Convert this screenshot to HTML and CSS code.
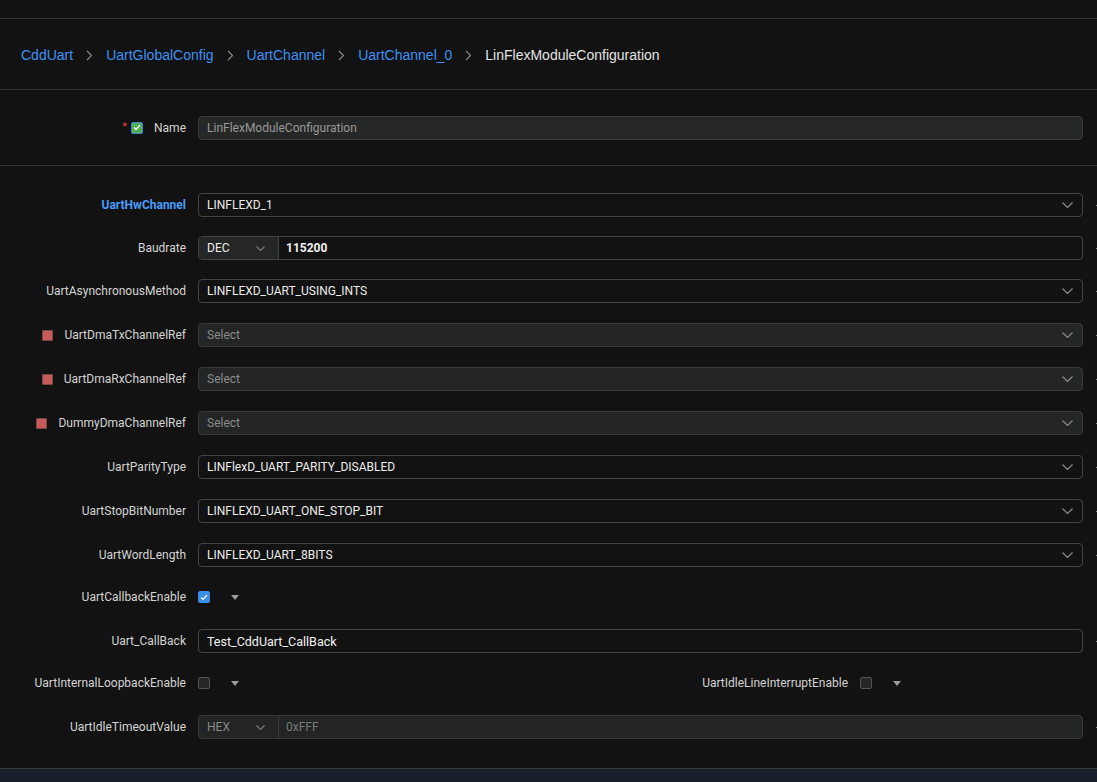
FILE: index.html
```html
<!DOCTYPE html>
<html lang="en">
<head>
  <meta charset="UTF-8">
  <title>LinFlexModuleConfiguration</title>
  <link rel="stylesheet" href="styles.css">
</head>
<body>
  <div class="topbar"></div>

  <nav class="crumbs">
    <a class="crumb">CddUart</a>
    <svg class="sep" width="7" height="11" viewBox="0 0 7 11"><path d="M1 1 L5.5 5.5 L1 10" fill="none" stroke="#8c8c8c" stroke-width="1.1"/></svg>
    <a class="crumb">UartGlobalConfig</a>
    <svg class="sep" width="7" height="11" viewBox="0 0 7 11"><path d="M1 1 L5.5 5.5 L1 10" fill="none" stroke="#8c8c8c" stroke-width="1.1"/></svg>
    <a class="crumb">UartChannel</a>
    <svg class="sep" width="7" height="11" viewBox="0 0 7 11"><path d="M1 1 L5.5 5.5 L1 10" fill="none" stroke="#8c8c8c" stroke-width="1.1"/></svg>
    <a class="crumb">UartChannel_0</a>
    <svg class="sep" width="7" height="11" viewBox="0 0 7 11"><path d="M1 1 L5.5 5.5 L1 10" fill="none" stroke="#8c8c8c" stroke-width="1.1"/></svg>
    <span class="crumb current">LinFlexModuleConfiguration</span>
  </nav>

  <div class="name-row">
    <div class="label">
      <span class="req">*</span>
      <span class="check green"><svg width="8" height="7" viewBox="0 0 8 7"><path d="M1 3.5 L3 5.5 L7 1" fill="none" stroke="#fff" stroke-width="1.3"/></svg></span>
      <span class="name-text">Name</span>
    </div>
    <div class="input disabled">LinFlexModuleConfiguration</div>
  </div>

  <div class="form">
    <div class="row">
      <label class="label key">UartHwChannel</label>
      <div class="select">
        <span>LINFLEXD_1</span>
        <svg class="chev" width="11" height="6" viewBox="0 0 11 6"><path d="M0.5 0.5 L5.5 5.5 L10.5 0.5" fill="none" stroke="#8a8a8a" stroke-width="1.2"/></svg>
      </div>
      <span class="tail"></span>
    </div>

    <div class="row tight">
      <label class="label">Baudrate</label>
      <div class="number">
        <div class="radix">
          <span>DEC</span>
          <svg width="9" height="5" viewBox="0 0 9 5"><path d="M0.5 0.5 L4.5 4.5 L8.5 0.5" fill="none" stroke="#7a7a7a" stroke-width="1.1"/></svg>
        </div>
        <span class="num-value">115200</span>
      </div>
      <span class="tail"></span>
    </div>

    <div class="row tight">
      <label class="label">UartAsynchronousMethod</label>
      <div class="select">
        <span>LINFLEXD_UART_USING_INTS</span>
        <svg class="chev" width="11" height="6" viewBox="0 0 11 6"><path d="M0.5 0.5 L5.5 5.5 L10.5 0.5" fill="none" stroke="#8a8a8a" stroke-width="1.2"/></svg>
      </div>
      <span class="tail"></span>
    </div>

    <div class="row">
      <label class="label"><span class="ref-mark"></span>UartDmaTxChannelRef</label>
      <div class="select empty">
        <span>Select</span>
        <svg class="chev" width="11" height="6" viewBox="0 0 11 6"><path d="M0.5 0.5 L5.5 5.5 L10.5 0.5" fill="none" stroke="#8a8a8a" stroke-width="1.2"/></svg>
      </div>
      <span class="tail"></span>
    </div>

    <div class="row">
      <label class="label"><span class="ref-mark"></span>UartDmaRxChannelRef</label>
      <div class="select empty">
        <span>Select</span>
        <svg class="chev" width="11" height="6" viewBox="0 0 11 6"><path d="M0.5 0.5 L5.5 5.5 L10.5 0.5" fill="none" stroke="#8a8a8a" stroke-width="1.2"/></svg>
      </div>
      <span class="tail"></span>
    </div>

    <div class="row">
      <label class="label"><span class="ref-mark"></span>DummyDmaChannelRef</label>
      <div class="select empty">
        <span>Select</span>
        <svg class="chev" width="11" height="6" viewBox="0 0 11 6"><path d="M0.5 0.5 L5.5 5.5 L10.5 0.5" fill="none" stroke="#8a8a8a" stroke-width="1.2"/></svg>
      </div>
      <span class="tail"></span>
    </div>

    <div class="row">
      <label class="label">UartParityType</label>
      <div class="select">
        <span>LINFlexD_UART_PARITY_DISABLED</span>
        <svg class="chev" width="11" height="6" viewBox="0 0 11 6"><path d="M0.5 0.5 L5.5 5.5 L10.5 0.5" fill="none" stroke="#8a8a8a" stroke-width="1.2"/></svg>
      </div>
      <span class="tail"></span>
    </div>

    <div class="row">
      <label class="label">UartStopBitNumber</label>
      <div class="select">
        <span>LINFLEXD_UART_ONE_STOP_BIT</span>
        <svg class="chev" width="11" height="6" viewBox="0 0 11 6"><path d="M0.5 0.5 L5.5 5.5 L10.5 0.5" fill="none" stroke="#8a8a8a" stroke-width="1.2"/></svg>
      </div>
      <span class="tail"></span>
    </div>

    <div class="row">
      <label class="label">UartWordLength</label>
      <div class="select">
        <span>LINFLEXD_UART_8BITS</span>
        <svg class="chev" width="11" height="6" viewBox="0 0 11 6"><path d="M0.5 0.5 L5.5 5.5 L10.5 0.5" fill="none" stroke="#8a8a8a" stroke-width="1.2"/></svg>
      </div>
      <span class="tail"></span>
    </div>

    <div class="row close">
      <label class="label">UartCallbackEnable</label>
      <span class="check on"><svg width="8" height="7" viewBox="0 0 8 7"><path d="M1 3.5 L3 5.5 L7 1" fill="none" stroke="#fff" stroke-width="1.2"/></svg></span>
      <span class="caret"></span>
    </div>

    <div class="row">
      <label class="label">Uart_CallBack</label>
      <div class="input text">Test_CddUart_CallBack</div>
      <span class="tail"></span>
    </div>

    <div class="row pair close">
      <div class="field first">
        <label class="label">UartInternalLoopbackEnable</label>
        <span class="check"></span>
        <span class="caret"></span>
      </div>
      <div class="field">
        <label class="label">UartIdleLineInterruptEnable</label>
        <span class="check"></span>
        <span class="caret"></span>
      </div>
    </div>

    <div class="row">
      <label class="label">UartIdleTimeoutValue</label>
      <div class="number disabled">
        <div class="radix">
          <span>HEX</span>
          <svg width="9" height="5" viewBox="0 0 9 5"><path d="M0.5 0.5 L4.5 4.5 L8.5 0.5" fill="none" stroke="#7a7a7a" stroke-width="1.1"/></svg>
        </div>
        <span class="num-value">0xFFF</span>
      </div>
      <span class="tail"></span>
    </div>
  </div>

  <div class="statusbar"></div>
</body>
</html>
```

FILE: styles.css
```css
html, body {
  margin: 0;
  height: 100%;
  overflow: hidden;
}

body {
  background-color: #121212;
  color: #d4d4d4;
  font-family: Roboto, "Open Sans", sans-serif;
  font-size: 12px;
}

.topbar {
  height: 18px;
  border-bottom: 1px solid #363636;
}

/* breadcrumb */
.crumbs {
  height: 68px;
  display: flex;
  align-items: center;
  gap: 12px;
  padding: 2px 0 0 21px;
  border-bottom: 1px solid #363636;
  font-family: "Liberation Sans", Arial, sans-serif;
  font-size: 14px;
}

.crumb {
  color: #3f90f4;
  cursor: pointer;
}

.crumb.current {
  color: #e4e4e4;
  cursor: default;
}

.sep {
  margin: 1px 1px 0;
}

/* name row */
.name-row {
  height: 75px;
  display: flex;
  align-items: center;
  gap: 12px;
  padding-right: 14px;
  border-bottom: 1px solid #363636;
}

.name-row .label {
  gap: 0;
}

.req {
  color: #e0443e;
  font-size: 11px;
  line-height: 1;
  align-self: flex-start;
  margin-right: 4px;
}

.name-text {
  margin-left: 11px;
}

/* form rows */
.form {
  display: flex;
  flex-direction: column;
  gap: 20px;
  padding: 27px 0 29px;
}

.row {
  height: 24px;
  display: flex;
  align-items: center;
  gap: 12px;
}

.row.tight {
  margin-top: -1px;
}

.row.close {
  margin-top: -2px;
}

.label {
  width: 186px;
  flex-shrink: 0;
  display: flex;
  align-items: center;
  justify-content: flex-end;
  gap: 11px;
  white-space: nowrap;
}

.label.key {
  color: #4a9cfb;
  font-weight: 700;
}

.ref-mark {
  width: 11px;
  height: 11px;
  box-sizing: border-box;
  background-color: #c75b5b;
  border: 1px solid #7c4848;
  border-radius: 1px;
}

.input,
.select,
.number {
  flex: 1;
  height: 24px;
  box-sizing: border-box;
  border: 1px solid #444;
  border-radius: 4px;
  display: flex;
  align-items: center;
  padding: 0 9px 0 8px;
  color: #ececec;
  white-space: nowrap;
}

.input.disabled {
  background-color: #262727;
  border-color: #3a3a3a;
  color: #999;
  flex: 0 0 885px;
}

.input.text {
  color: #f2f2f2;
  font-size: 12.5px;
}

.select {
  justify-content: space-between;
}

.select.empty {
  background-color: #242525;
  border-color: #393939;
  color: #8c8c8c;
}

.number {
  padding: 0;
}

.radix {
  width: 80px;
  height: 100%;
  box-sizing: border-box;
  display: flex;
  align-items: center;
  justify-content: space-between;
  padding: 0 13px 0 8px;
  background-color: #252626;
  border-right: 1px solid #444;
  border-radius: 3px 0 0 3px;
}

.num-value {
  padding-left: 7px;
  font-weight: 700;
  color: #f0f0f0;
}

.number.disabled {
  background-color: #232424;
  border-color: #393939;
  color: #8a8a8a;
}

.number.disabled .radix {
  background: none;
  border-right-color: #393939;
}

.number.disabled .num-value {
  font-weight: 400;
  color: #7a7a7a;
}

/* row action button, clipped by the window edge */
.tail {
  width: 1px;
  height: 1px;
  margin-left: 1px;
  background-color: #8a8a8a;
}

/* checkboxes */
.check {
  width: 12px;
  height: 12px;
  box-sizing: border-box;
  flex-shrink: 0;
  border: 1px solid #555;
  border-radius: 2px;
  background-color: #262626;
  display: flex;
  align-items: center;
  justify-content: center;
}

.check.on {
  background-color: #3b8de6;
  border-color: #3b8de6;
}

.check.green {
  background-color: #4caf50;
  border-color: #3e86d8;
}

.caret {
  width: 0;
  height: 0;
  margin-left: 9px;
  border-left: 4px solid transparent;
  border-right: 4px solid transparent;
  border-top: 5px solid #9c9c9c;
}

.pair {
  gap: 0;
}

.field {
  display: flex;
  align-items: center;
  gap: 12px;
}

.field.first {
  width: 662px;
}

.statusbar {
  height: 13px;
  border-top: 1px solid #3c3c3c;
  background-color: #18212b;
}
```
